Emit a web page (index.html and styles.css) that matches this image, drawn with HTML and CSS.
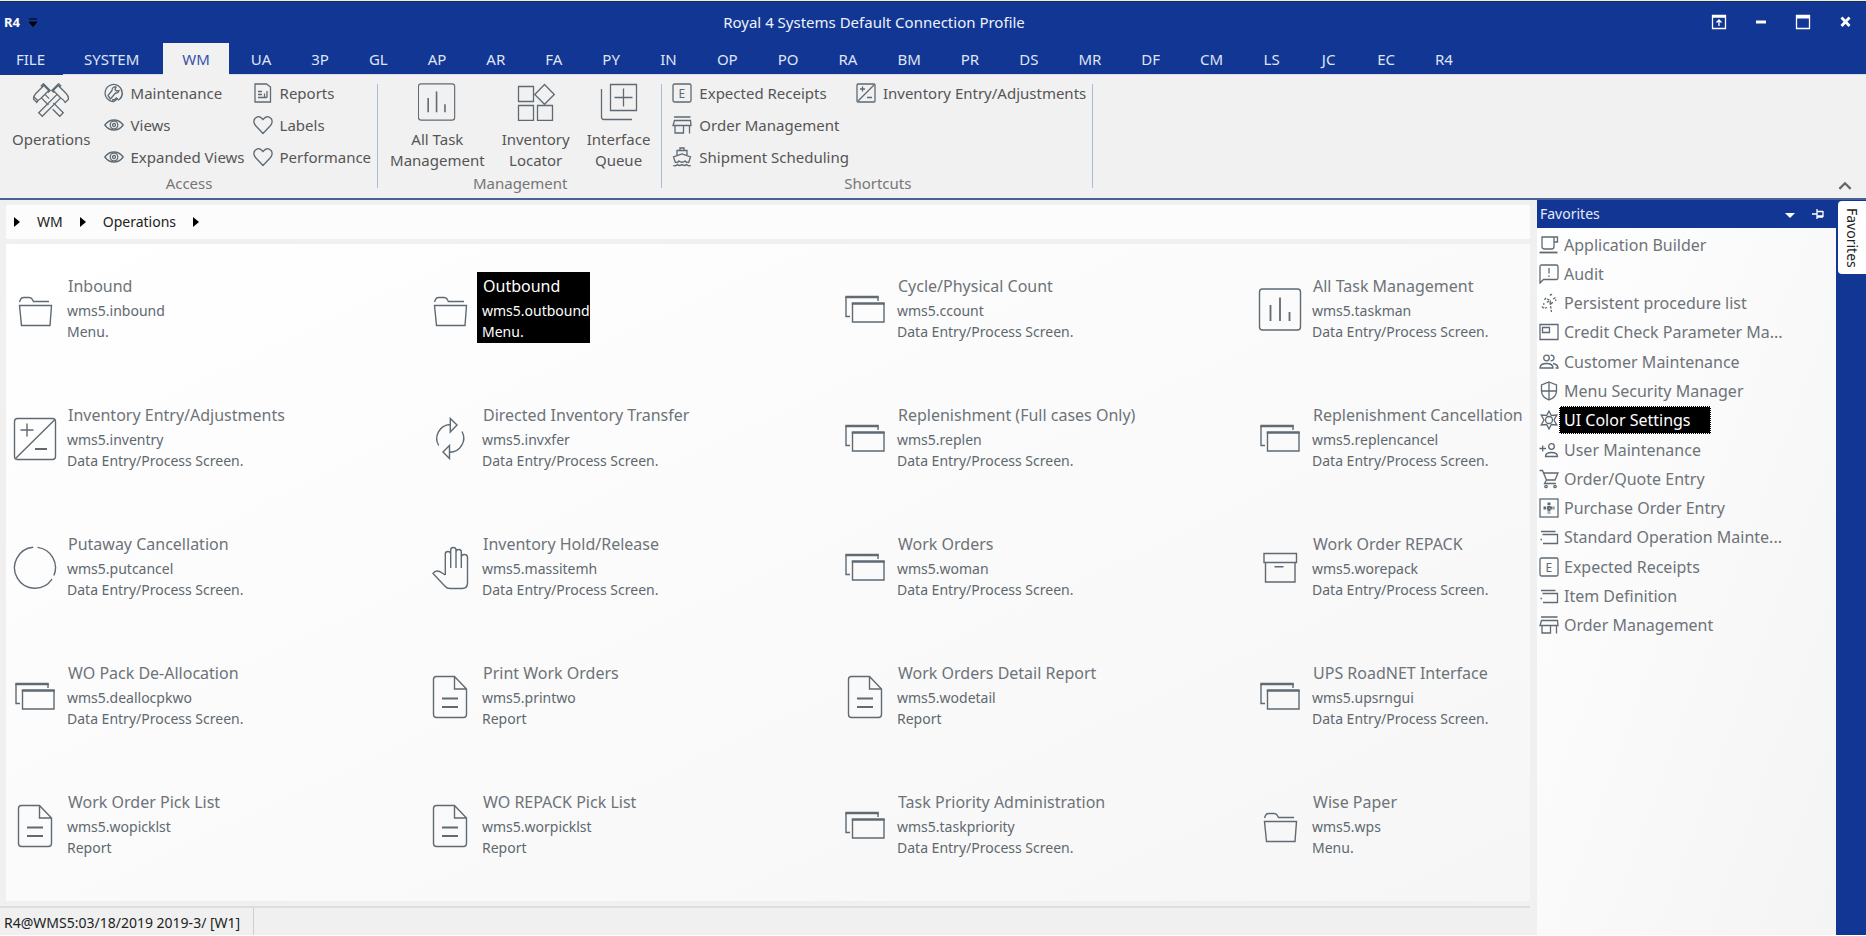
FILE: index.html
```html
<!DOCTYPE html>
<html lang="en">
<head>
<meta charset="utf-8">
<title>Royal 4 Systems Default Connection Profile</title>
<link rel="stylesheet" href="styles.css">
</head>
<body>
<svg class="sprite" aria-hidden="true">
  <symbol id="folder" viewBox="0 0 48 48"><path d="M8.500 16l1-2.500q.8-2 3-2h5.500q2 0 3 1.500l1.500 2.500H38M8.500 19.500h32l-1.500 20H10.500z"/></symbol>
  <symbol id="adjust" viewBox="0 0 48 48"><rect x="3.500" y="3.500" width="41" height="41" rx="3"/><path d="M5 43L43.500 5M9.500 15h13M16 8.500v13"/><path d="M24 34h12" stroke-width="2"/></symbol>
  <symbol id="ring" viewBox="0 0 48 48"><path d="M26.500 3.400A20.500 20.500 0 0 1 42.900 31.600M41 35.200A20.500 20.500 0 1 1 22.200 3.300"/></symbol>
  <symbol id="cycle" viewBox="0 0 48 48"><path d="M12.700 30.500A14 14 0 0 1 24 9.500M24.300 3.500v13.500L31 10zM36 16.500A14 14 0 0 1 23.500 37.200M23.500 30.500v13L17 37z"/></symbol>
  <symbol id="hand" viewBox="0 0 48 48"><path d="M19.300 31V10q0-2.500 2.700-2.500t2.700 2.500v14M24.700 24V6q0-2.500 2.600-2.500T30 6v18M30 8q0-2.500 2.700-2.500T35.300 8v16M35.300 13q0-2.500 3-2.500t3.200 2.500v26q0 5.500-5.500 5.500H24q-3 0-5-2.300L7 29.500q2.500-3.500 6.500-2l5.800 3.500"/></symbol>
  <symbol id="windows" viewBox="0 0 48 48"><path d="M9 30.500H5V11M37 11v4M11.500 17v19H43V17"/><path d="M4.300 11h33.500M10.800 17.500h32.900" stroke-width="2.600"/></symbol>
  <symbol id="chart" viewBox="0 0 48 48"><rect x="3.500" y="3" width="41" height="41" rx="3"/><path d="M14.500 19v16M24 11.500V35M33.500 26v9" stroke-width="1.800"/></symbol>
  <symbol id="box" viewBox="0 0 48 48"><path d="M8 9.500h32.500v9H8zM9.500 18.500v19.500h29.500V18.500M18.500 22.800h9"/></symbol>
  <symbol id="doc" viewBox="0 0 48 48"><path d="M28.500 3.500H10.500q-3 0-3 3v35q0 3 3 3h27q3 0 3-3V16zM28.500 3.500V16h12"/><path d="M16 25.500h16M16 34h16" stroke-width="2"/></symbol>

  <symbol id="hammers" viewBox="0 0 38 38">
    <g transform="translate(9 11) rotate(-45)"><path d="M-9-1.500Q-7-4-3-4H8v7H-3q-3-1-6 0zM-7-4v7M-2.500 3v10M2.500 3v6M-2.500 19v10h5V15M6-4v-1.500h3V4H6"/></g>
    <g transform="translate(29 11) rotate(45)"><path d="M9-1.500Q7-4 3-4H-8v7H3q3-1 6 0zM-2.500 3v26h5V3M-6-4v-1.500h-3V4h3"/></g>
  </symbol>
  <symbol id="locator" viewBox="0 0 38 38"><path d="M1.500 3.500h15v15h-15zM1.500 22.500h15v15h-15zM20.500 22.500h15v15h-15zM27.500 1.500L37.300 11.500 27.500 21.300 17.800 11.500z"/></symbol>
  <symbol id="queue" viewBox="0 0 38 38"><path d="M10.500 1.500h26v26h-26zM23.500 5.500v18M14.500 14.500h18M1.500 6v28q0 2.500 2.500 2.500h28"/></symbol>

  <symbol id="wrench" viewBox="0 0 20 20"><path d="M10 18.500A8.500 8.500 0 1 1 14 17.300M14 17.300A8.500 8.500 0 0 0 18.500 10M4 12.500l2.500 3.500 5-6q3 .5 3.500-2.500l-2.500.5-1.500-1.500 1-2.500q-4-.5-4 3.500zM10 18.500l4-3M8 17q3 0 5-2.500"/></symbol>
  <symbol id="eye" viewBox="0 0 20 20"><path d="M.8 10Q4.500 5 10 5T19.200 10Q15.500 15 10 15T.8 10z"/><circle cx="10" cy="10" r="3.800"/><circle cx="10" cy="10" r="1.500"/></symbol>
  <symbol id="report" viewBox="0 0 20 20"><path d="M2 1h11.500L17.500 4v15H2zM5 8.500h4M5 11.500h4M5 14.500h9M11.500 10.500v4M14 8v6.500"/></symbol>
  <symbol id="heart" viewBox="0 0 20 20"><path d="M10 18.500L2.500 10.500Q-.5 6.500 2 3.500 6-.5 10 4.500 14-.5 18 3.500q2.500 3-.5 7z"/></symbol>
  <symbol id="ebox" viewBox="0 0 20 20"><rect x="1" y="1" width="18" height="18" rx="1.500"/><text x="6.500" y="14.500">E</text></symbol>
  <symbol id="store" viewBox="0 0 20 20"><path d="M2 2h16.500M2.500 5.500h16l.5 5H1zM3 10.500V18h8.500v-7.500M17.500 10.500v8"/></symbol>
  <symbol id="ship" viewBox="0 0 20 20"><path d="M8 3V1h4v2M5 8V3.500h10V8M3.500 16L1.500 10 10 7l8.500 3-2 6M1 18.500q2.500 1 4.500-1 2 2 4.500 0 2.500 2 4.500 0 2 2 4.500 1M3.500 15q2 1 3.500-1 3 2.500 6 0 1.500 2 3.500 1"/></symbol>
  <symbol id="adjust-s" viewBox="0 0 20 20"><rect x="1" y="1" width="18" height="18" rx="1"/><path d="M2 18L18 2M4 6h5M6.500 3.500v5M11 14.500h5"/></symbol>

  <symbol id="cup" viewBox="0 0 20 20"><path d="M3 2h15.500v5H15v4.500q0 2.500-2.500 2.500h-7Q3 14 3 11.500zM15 2v5"/><path d="M.5 17.500h18" stroke-width="1.800"/></symbol>
  <symbol id="alert" viewBox="0 0 20 20"><path d="M1 19V2.500Q1 1 2.500 1h15Q19 1 19 2.500V14q0 1.500-1.500 1.500h-13zM10 4v5.500M10 11.500v1.500"/></symbol>
  <symbol id="steps" viewBox="0 0 20 20"><path d="M11 2.500q1.500-2 3 0M8 6l3 1 1 4 2-2M11 9.500l1.500 9.500M7 5l-2 2.500M3 13.500l2 2 3-1M14 6l2-1 1 3M4 11h1.500M10 8l-3 2" stroke-dasharray="2.500 1.200"/></symbol>
  <symbol id="card" viewBox="0 0 20 20"><path d="M1 2.500h18v15H1zM3.500 5.500h7v5h-7z"/></symbol>
  <symbol id="people" viewBox="0 0 20 20"><circle cx="7.500" cy="6" r="2.800"/><path d="M1 16q0-4.500 6.500-4.500T14 16zM11.500 3.200q3.500 0 3.500 2.800t-3.500 2.800M14 11.500q5 1 5 4.500h-2.500"/></symbol>
  <symbol id="shield" viewBox="0 0 20 20"><path d="M10 1l7.500 3v6q0 6-7.500 9-7.500-3-7.500-9V4zM10 1v18M2.500 10h15"/></symbol>
  <symbol id="star" viewBox="0 0 20 20"><path d="M10 1l2.300 4.500 5.500-.500-2.800 5 2.800 5-5.500-.500L10 19l-2.300-4.500-5.500.500L5 10 2.200 5l5.500.500z"/><circle cx="10" cy="10" r="3.500"/></symbol>
  <symbol id="adduser" viewBox="0 0 20 20"><path d="M.5 8.500H7M3.700 5.500v6M6.500 16.500q0-4 6-4t6 4z"/><circle cx="12.500" cy="6.500" r="2.800"/></symbol>
  <symbol id="cart" viewBox="0 0 20 20"><path d="M.5 1.500h3l4 9.500h8.500L19 4H5M7.500 11L5.500 14.500H17"/><circle cx="7" cy="17.500" r="1.200"/><circle cx="16" cy="17.500" r="1.200"/></symbol>
  <symbol id="plusbox" viewBox="0 0 20 20"><rect x="1" y="1" width="18" height="18"/><path d="M10 4.500v11M4.500 10h11" stroke-width="3" stroke-dasharray="2.500 .8"/></symbol>
  <symbol id="layers" viewBox="0 0 20 20"><path d="M2 4.500h14.500M3.500 7.500h15v9H4M1.500 12.500h1.500"/></symbol>
</svg>

<header class="titlebar">
  <div class="brand"><span class="logo">R4</span>
    <button class="plain" aria-label="Customize quick access"><svg class="qat" viewBox="0 0 8 9"><path d="M0 1h8M0 4h8L4 8.500z"/></svg></button>
  </div>
  <h1 class="caption">Royal 4 Systems Default Connection Profile</h1>
  <div class="controls">
    <button aria-label="Ribbon display"><svg viewBox="0 0 16 16"><path d="M1.500 1.500h13v13h-13zM1 3h14M8 12V6M5.500 8.500L8 6l2.500 2.500"/></svg></button>
    <button aria-label="Minimize"><svg viewBox="0 0 16 16"><path d="M3 8h10" stroke-width="3"/></svg></button>
    <button aria-label="Maximize"><svg viewBox="0 0 16 16"><path d="M1.500 1.500h13v13h-13z"/><path d="M1 3h14" stroke-width="3"/></svg></button>
    <button aria-label="Close"><svg viewBox="0 0 16 16"><path d="M4.500 3.500l8 8.500M12.500 3.500l-8 8.500" stroke-width="2.800"/></svg></button>
  </div>
</header>

<nav class="tabs">
  <button class="tab file">FILE</button><button class="tab system">SYSTEM</button><button class="tab active">WM</button><button class="tab">UA</button><button class="tab">3P</button><button class="tab">GL</button><button class="tab">AP</button><button class="tab">AR</button><button class="tab">FA</button><button class="tab">PY</button><button class="tab">IN</button><button class="tab">OP</button><button class="tab">PO</button><button class="tab">RA</button><button class="tab">BM</button><button class="tab">PR</button><button class="tab">DS</button><button class="tab">MR</button><button class="tab">DF</button><button class="tab">CM</button><button class="tab">LS</button><button class="tab">JC</button><button class="tab">EC</button><button class="tab">R4</button>
</nav>

<section class="ribbon">
  <div class="group access">
    <div class="group-body">
      <button class="big"><svg class="i38"><use href="#hammers"/></svg><span>Operations</span></button>
      <div class="stack">
        <button class="small"><svg class="i20"><use href="#wrench"/></svg>Maintenance</button>
        <button class="small"><svg class="i20"><use href="#eye"/></svg>Views</button>
        <button class="small"><svg class="i20"><use href="#eye"/></svg>Expanded Views</button>
      </div>
      <div class="stack">
        <button class="small"><svg class="i20"><use href="#report"/></svg>Reports</button>
        <button class="small"><svg class="i20"><use href="#heart"/></svg>Labels</button>
        <button class="small"><svg class="i20"><use href="#heart"/></svg>Performance</button>
      </div>
    </div>
    <div class="group-label">Access</div>
  </div>
  <div class="group management">
    <div class="group-body">
      <button class="big"><svg class="i38 frame" viewBox="3 2 43 43"><use href="#chart" width="48" height="48"/></svg><span>All Task<br>Management</span></button>
      <button class="big"><svg class="i38"><use href="#locator"/></svg><span>Inventory<br>Locator</span></button>
      <button class="big"><svg class="i38"><use href="#queue"/></svg><span>Interface<br>Queue</span></button>
    </div>
    <div class="group-label">Management</div>
  </div>
  <div class="group shortcuts">
    <div class="group-body">
      <div class="stack">
        <button class="small"><svg class="i20"><use href="#ebox"/></svg>Expected Receipts</button>
        <button class="small"><svg class="i20"><use href="#store"/></svg>Order Management</button>
        <button class="small"><svg class="i20"><use href="#ship"/></svg>Shipment Scheduling</button>
      </div>
      <div class="stack">
        <button class="small"><svg class="i20"><use href="#adjust-s"/></svg>Inventory Entry/Adjustments</button>
      </div>
    </div>
    <div class="group-label">Shortcuts</div>
  </div>
  <button class="collapse" aria-label="Collapse ribbon"><svg viewBox="0 0 12 8"><path d="M1 7l5-5 5 5"/></svg></button>
</section>

<main class="workspace">
  <div class="content">
    <nav class="crumbs"><i></i><a href="#">WM</a><i></i><a href="#">Operations</a><i></i></nav>
    <section class="tiles">
      <button class="tile"><svg class="i48"><use href="#folder"/></svg><span class="text"><b>Inbound</b><span>wms5.inbound</span><span>Menu.</span></span></button>
      <button class="tile selected"><svg class="i48"><use href="#folder"/></svg><span class="text"><b>Outbound</b><span>wms5.outbound</span><span>Menu.</span></span></button>
      <button class="tile"><svg class="i48"><use href="#windows"/></svg><span class="text"><b>Cycle/Physical Count</b><span>wms5.ccount</span><span>Data Entry/Process Screen.</span></span></button>
      <button class="tile"><svg class="i48"><use href="#chart"/></svg><span class="text"><b>All Task Management</b><span>wms5.taskman</span><span>Data Entry/Process Screen.</span></span></button>

      <button class="tile"><svg class="i48"><use href="#adjust"/></svg><span class="text"><b>Inventory Entry/Adjustments</b><span>wms5.inventry</span><span>Data Entry/Process Screen.</span></span></button>
      <button class="tile"><svg class="i48"><use href="#cycle"/></svg><span class="text"><b>Directed Inventory Transfer</b><span>wms5.invxfer</span><span>Data Entry/Process Screen.</span></span></button>
      <button class="tile"><svg class="i48"><use href="#windows"/></svg><span class="text"><b>Replenishment (Full cases Only)</b><span>wms5.replen</span><span>Data Entry/Process Screen.</span></span></button>
      <button class="tile"><svg class="i48"><use href="#windows"/></svg><span class="text"><b>Replenishment Cancellation</b><span>wms5.replencancel</span><span>Data Entry/Process Screen.</span></span></button>

      <button class="tile"><svg class="i48"><use href="#ring"/></svg><span class="text"><b>Putaway Cancellation</b><span>wms5.putcancel</span><span>Data Entry/Process Screen.</span></span></button>
      <button class="tile"><svg class="i48"><use href="#hand"/></svg><span class="text"><b>Inventory Hold/Release</b><span>wms5.massitemh</span><span>Data Entry/Process Screen.</span></span></button>
      <button class="tile"><svg class="i48"><use href="#windows"/></svg><span class="text"><b>Work Orders</b><span>wms5.woman</span><span>Data Entry/Process Screen.</span></span></button>
      <button class="tile"><svg class="i48"><use href="#box"/></svg><span class="text"><b>Work Order REPACK</b><span>wms5.worepack</span><span>Data Entry/Process Screen.</span></span></button>

      <button class="tile"><svg class="i48"><use href="#windows"/></svg><span class="text"><b>WO Pack De-Allocation</b><span>wms5.deallocpkwo</span><span>Data Entry/Process Screen.</span></span></button>
      <button class="tile"><svg class="i48"><use href="#doc"/></svg><span class="text"><b>Print Work Orders</b><span>wms5.printwo</span><span>Report</span></span></button>
      <button class="tile"><svg class="i48"><use href="#doc"/></svg><span class="text"><b>Work Orders Detail Report</b><span>wms5.wodetail</span><span>Report</span></span></button>
      <button class="tile"><svg class="i48"><use href="#windows"/></svg><span class="text"><b>UPS RoadNET Interface</b><span>wms5.upsrngui</span><span>Data Entry/Process Screen.</span></span></button>

      <button class="tile"><svg class="i48"><use href="#doc"/></svg><span class="text"><b>Work Order Pick List</b><span>wms5.wopicklst</span><span>Report</span></span></button>
      <button class="tile"><svg class="i48"><use href="#doc"/></svg><span class="text"><b>WO REPACK Pick List</b><span>wms5.worpicklst</span><span>Report</span></span></button>
      <button class="tile"><svg class="i48"><use href="#windows"/></svg><span class="text"><b>Task Priority Administration</b><span>wms5.taskpriority</span><span>Data Entry/Process Screen.</span></span></button>
      <button class="tile"><svg class="i48"><use href="#folder"/></svg><span class="text"><b>Wise Paper</b><span>wms5.wps</span><span>Menu.</span></span></button>
    </section>
    <footer class="status"><span>R4@WMS5:03/18/2019 2019-3/ [W1]</span></footer>
  </div>

  <aside class="favorites">
    <header class="fav-head"><h2>Favorites</h2>
      <button class="plain" aria-label="Panel menu"><svg class="drop" viewBox="0 0 12 12"><path d="M1 5h10L6 10z"/></svg></button>
      <button class="plain" aria-label="Pin panel"><svg class="pin" viewBox="0 0 12 12"><path d="M0 6h5M5 1v10M5 3.500h6M5 8h6M11 3v6M5 9h6"/></svg></button>
    </header>
    <ul class="fav-list">
      <li><svg class="i20"><use href="#cup"/></svg><a href="#">Application Builder</a></li>
      <li><svg class="i20"><use href="#alert"/></svg><a href="#">Audit</a></li>
      <li><svg class="i20"><use href="#steps"/></svg><a href="#">Persistent procedure list</a></li>
      <li><svg class="i20"><use href="#card"/></svg><a href="#">Credit Check Parameter Ma...</a></li>
      <li><svg class="i20"><use href="#people"/></svg><a href="#">Customer Maintenance</a></li>
      <li><svg class="i20"><use href="#shield"/></svg><a href="#">Menu Security Manager</a></li>
      <li><svg class="i20"><use href="#star"/></svg><a href="#" class="current">UI Color Settings</a></li>
      <li><svg class="i20"><use href="#adduser"/></svg><a href="#">User Maintenance</a></li>
      <li><svg class="i20"><use href="#cart"/></svg><a href="#">Order/Quote Entry</a></li>
      <li><svg class="i20"><use href="#plusbox"/></svg><a href="#">Purchase Order Entry</a></li>
      <li><svg class="i20"><use href="#layers"/></svg><a href="#">Standard Operation Mainte...</a></li>
      <li><svg class="i20"><use href="#ebox"/></svg><a href="#">Expected Receipts</a></li>
      <li><svg class="i20"><use href="#layers"/></svg><a href="#">Item Definition</a></li>
      <li><svg class="i20"><use href="#store"/></svg><a href="#">Order Management</a></li>
    </ul>
  </aside>
  <div class="dock"><button class="dock-tab">Favorites</button></div>
</main>
</body>
</html>
```

FILE: styles.css
```css
:root {
  --blue: #123694;
  --ink: #60686f;
  --icon: #5f6a73;
  --face: #f0f0f0;
}

* { box-sizing: border-box; }

body {
  margin: 0;
  min-height: 100vh;
  display: flex;
  flex-direction: column;
  background: var(--face);
  border-bottom: 1px solid #fff;
  font: 15px/22px "Noto Sans", "Open Sans", sans-serif;
  color: #555;
}

button {
  font: inherit;
  color: inherit;
  background: none;
  border: 0;
  padding: 0;
  margin: 0;
  text-align: left;
}

a { color: inherit; text-decoration: none; }

h1, h2, ul { margin: 0; padding: 0; font-weight: 400; }

svg { fill: none; stroke: var(--icon); stroke-width: 1.3; flex: none; display: block; }
svg text { font: 12px "Noto Sans", sans-serif; fill: var(--icon); stroke: none; }

.sprite { display: none; }
.i20 { width: 20px; height: 20px; }
.i38 { width: 38px; height: 38px; }
.i48 { width: 48px; height: 48px; stroke-width: 1.4; }

/* Title bar */
.titlebar {
  display: grid;
  grid-template-columns: 50px 1fr auto;
  height: 43px;
  border-top: 1px solid #e8f0ee;
  background: var(--blue);
  box-shadow: inset 0 1px #1b2f4a;
  color: #eef2fb;
}
.brand { display: flex; align-items: center; gap: 9px; padding-left: 4px; }
.logo { font-size: 13px; font-weight: 700; color: #fff; }
.qat { width: 8px; height: 9px; fill: #000; stroke: #000; stroke-width: 1; }
.caption { font-size: 15px; line-height: 42px; text-align: center; }
.controls { display: flex; }
.controls button { width: 42px; display: grid; place-items: center; }
.controls svg { width: 16px; height: 16px; stroke: #fff; }

/* Tab strip */
.tabs { display: flex; height: 32px; background: var(--blue); color: #dfe5f3; box-shadow: inset 0 -1px #d9dde8; }
.tab { min-width: 57px; padding: 1px 20px 0; line-height: 31px; height: 31px; text-align: center; }
.file { width: 63px; padding: 0 2px 0 0; height: 32px; background: var(--blue); }
.system { padding: 1px 24px 0 21px; }
.active { height: 32px; padding: 1px 19px 0; margin-right: 2px; background: #f1f1f1; color: #3553a8; }

/* Ribbon */
.ribbon {
  display: flex;
  position: relative;
  padding: 2px 0 5px;
  background: #f1f1f1;
  border-bottom: 2px solid #4b6199;
}
.group { position: relative; display: flex; flex-direction: column; }
.group::after {
  content: "";
  position: absolute;
  right: 0;
  top: 7px;
  bottom: 5px;
  width: 1px;
  background: #a9bcd6;
}
.group-body { display: flex; height: 96px; }
.group-label { text-align: center; line-height: 20px; color: #767676; }
.big { display: flex; flex-direction: column; align-items: center; text-align: center; gap: 8px; padding-top: 6px; line-height: 21px; }
.stack { display: flex; flex-direction: column; }
.small { display: flex; align-items: center; gap: 7px; height: 32px; white-space: nowrap; }
.access .group-body { gap: 8px; padding: 0 7px 0 12px; }
.access .big { margin-right: 5px; }
.management .group-body { gap: 17px; padding: 0 12px; }
.shortcuts .group-body { gap: 7px; padding: 0 7px 0 10px; }
.collapse { position: absolute; right: 14px; bottom: 8px; }
.collapse svg { width: 14px; height: 9px; stroke: #666; stroke-width: 2; }

/* Workspace */
.workspace { flex: 1; display: grid; grid-template-columns: 1fr 299px 30px; }
.content { display: flex; flex-direction: column; padding: 5px 7px 0 0; min-width: 0; }
.crumbs {
  display: flex;
  align-items: center;
  gap: 17px;
  height: 34px;
  margin: 0 0 5px 6px;
  padding-left: 8px;
  background: #fcfcfc;
  font-size: 14px;
  color: #222;
}
.crumbs i { border: solid transparent; border-width: 5px 0 5px 6px; border-left-color: #000; }

.tiles {
  flex: 1;
  display: grid;
  grid-template-columns: repeat(3, 415fr) 279fr;
  align-content: start;
  row-gap: 58px;
  margin: 0 0 5px 6px;
  padding-top: 28px;
  background: linear-gradient(155deg, #fff, #f6f6f6);
}
.tile { display: flex; align-items: flex-start; gap: 3px; padding-left: 5px; min-width: 0; white-space: nowrap; color: var(--ink); }
.tile .i48 { margin-top: 14px; }
.text { display: flex; flex-direction: column; padding: 0 0 1px 5px; font-size: 14px; line-height: 21px; }
.text { padding-bottom: 1px; }
.text b { padding-left: 1px; font-weight: 400; font-size: 16px; line-height: 28px; color: #6d7379; }
.tile { min-height: 71px; }
.selected .text, .selected .text b { background: #000; color: #fff; }

.status { height: 29px; border-top: 2px solid #dedede; font-size: 14px; line-height: 29px; color: #222; }
.status span { display: block; width: fit-content; height: 27px; padding: 0 13px 0 4px; border-right: 1px solid #cfcfcf; }

/* Favorites */
.favorites { background: linear-gradient(110deg, #fff, #f4f4f4); }
.fav-head {
  display: flex;
  align-items: center;
  gap: 16px;
  height: 28px;
  padding: 0 12px 0 3px;
  background: var(--blue);
  color: #e6ebf7;
}
.fav-head h2 { flex: 1; font-size: 14px; }
.drop { width: 12px; height: 12px; fill: #fff; stroke: none; }
.pin { width: 12px; height: 12px; stroke: #fff; }
.fav-list { display: flex; flex-direction: column; height: 412px; padding: 2px 0 0 2px; font-size: 16px; color: #6d7379; list-style: none; }
.fav-list li { flex: 1; display: flex; align-items: center; white-space: nowrap; }
.fav-list a { padding: 0 5px; line-height: 28px; }
.fav-list .current { background: #000; color: #fff; outline: 1px dotted #fff; outline-offset: -1px; padding-right: 20px; }

.dock { background: var(--blue); padding: 1px 0 0 2px; }
.dock-tab { width: 28px; height: 73px; border-radius: 4px 0 0 4px; background: #fff; color: #222; writing-mode: vertical-rl; font-size: 14px; line-height: 28px; text-align: center; }
```
